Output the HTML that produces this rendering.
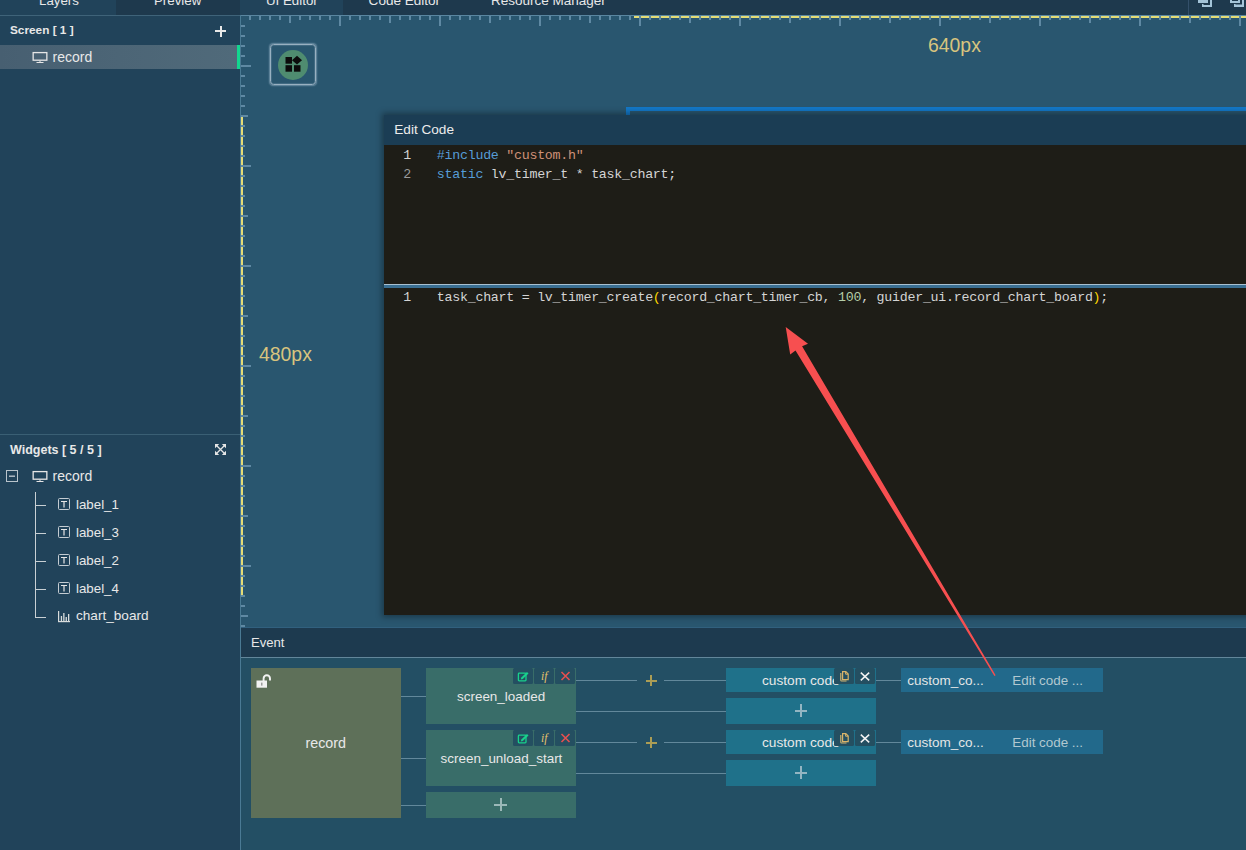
<!DOCTYPE html>
<html><head><meta charset="utf-8">
<style>
*{margin:0;padding:0;box-sizing:border-box}
html,body{width:1246px;height:850px;overflow:hidden;background:#21435a;font-family:"Liberation Sans",sans-serif;color:#e6e6e6}
.a{position:absolute}
.t{position:absolute;white-space:nowrap;line-height:1}
</style></head><body>
<div class="a" style="left:0px;top:0px;width:1246px;height:15px;background:#1e394d;"></div>
<div class="a" style="left:0px;top:0px;width:116px;height:15px;background:#21435a;"></div>
<div class="a" style="left:240px;top:0px;width:103px;height:15px;background:#21435a;"></div>
<div class="t" style="left:39px;top:-6.26px;font-size:13.3px;color:#e8e8e8;font-weight:400;font-family:'Liberation Sans',sans-serif;">Layers</div>
<div class="t" style="left:154px;top:-6.26px;font-size:13.3px;color:#e8e8e8;font-weight:400;font-family:'Liberation Sans',sans-serif;">Preview</div>
<div class="t" style="left:266px;top:-6.26px;font-size:13.3px;color:#e8e8e8;font-weight:400;font-family:'Liberation Sans',sans-serif;">UI Editor</div>
<div class="t" style="left:368.6px;top:-6.47px;font-size:13.55px;color:#e8e8e8;font-weight:400;font-family:'Liberation Sans',sans-serif;">Code Editor</div>
<div class="t" style="left:491px;top:-6.43px;font-size:13.5px;color:#e8e8e8;font-weight:400;font-family:'Liberation Sans',sans-serif;">Resource Manager</div>
<div class="a" style="left:1188px;top:0px;width:1px;height:15px;background:#34506a;"></div>
<svg class="a" style="left:1190px;top:0" width="56" height="15" viewBox="1190 0 56 15"><g fill="#a4c4d8"><rect x="1198" y="0" width="10" height="3"/><rect x="1210" y="0" width="2" height="7"/><rect x="1202" y="5" width="10" height="2"/><rect x="1202" y="4" width="1.5" height="3"/><path d="M1230 0 H1240 V3 H1230Z M1232 0 V1 H1238 V0Z" fill-rule="evenodd"/><rect x="1242" y="0" width="2" height="7"/><rect x="1234" y="4.5" width="10" height="2.5"/><rect x="1234" y="4" width="1.5" height="3"/></g></svg>
<div class="a" style="left:0px;top:15px;width:240px;height:1px;background:#3f6379;"></div>
<div class="a" style="left:0px;top:16px;width:240px;height:834px;background:#21435a;"></div>
<div class="a" style="left:240px;top:15px;width:1px;height:835px;background:#4a7a94;"></div>
<div class="t" style="left:10px;top:25.01px;font-size:11.8px;color:#e8e8e8;font-weight:700;font-family:'Liberation Sans',sans-serif;">Screen [ 1 ]</div>
<div class="a" style="left:215px;top:30px;width:11px;height:2px;background:#e8e8e8;"></div>
<div class="a" style="left:219.5px;top:25.5px;width:2px;height:11px;background:#e8e8e8;"></div>
<div class="a" style="left:0px;top:45px;width:237px;height:24px;background:linear-gradient(90deg,#475f71,#4c6576 50%,#506a7a);"></div>
<div class="a" style="left:237px;top:45px;width:3px;height:24px;background:#12d68f;"></div>
<svg class="a" style="left:32px;top:51px" width="16" height="12" viewBox="0 0 16 12"><rect x="1.15" y="1.6" width="13.7" height="7.6" fill="none" stroke="#e6e6e6" stroke-width="1.3"/><rect x="7.5" y="9.8" width="1" height="1.4" fill="#e6e6e6"/><rect x="4.5" y="11" width="7" height="1" fill="#e6e6e6"/></svg>
<div class="t" style="left:52.5px;top:50.15px;font-size:14px;color:#e8e8e8;font-weight:400;font-family:'Liberation Sans',sans-serif;">record</div>
<div class="a" style="left:0px;top:434px;width:240px;height:1px;background:#3a5f74;"></div>
<div class="t" style="left:10px;top:444.12px;font-size:12.5px;color:#e8e8e8;font-weight:700;font-family:'Liberation Sans',sans-serif;">Widgets [ 5 / 5 ]</div>
<svg class="a" style="left:214px;top:443px" width="13" height="13" viewBox="0 0 13 13"><g stroke="#e6e6e6" stroke-width="1.3" fill="none"><path d="M2.5 2.5 L10.5 10.5 M10.5 2.5 L2.5 10.5"/></g><g fill="#e6e6e6"><path d="M1 1 H5.2 L1 5.2Z"/><path d="M12 1 H7.8 L12 5.2Z"/><path d="M1 12 H5.2 L1 7.8Z"/><path d="M12 12 H7.8 L12 7.8Z"/></g></svg>
<svg class="a" style="left:5px;top:469px" width="14" height="14" viewBox="0 0 14 14"><rect x="1.5" y="1.5" width="11" height="11" fill="none" stroke="#b9c4cc" stroke-width="1"/><rect x="4" y="6.5" width="6" height="1.4" fill="#b9c4cc"/></svg>
<svg class="a" style="left:32px;top:470px" width="16" height="12" viewBox="0 0 16 12"><rect x="1.15" y="1.6" width="13.7" height="7.6" fill="none" stroke="#e6e6e6" stroke-width="1.3"/><rect x="7.5" y="9.8" width="1" height="1.4" fill="#e6e6e6"/><rect x="4.5" y="11" width="7" height="1" fill="#e6e6e6"/></svg>
<div class="t" style="left:52.5px;top:469.15px;font-size:14px;color:#e8e8e8;font-weight:400;font-family:'Liberation Sans',sans-serif;">record</div>
<div class="a" style="left:35px;top:492px;width:1px;height:126px;background:#c9d0d4;"></div>
<div class="a" style="left:35px;top:505px;width:11px;height:1px;background:#c9d0d4;"></div>
<svg class="a" style="left:57px;top:497px" width="14" height="14" viewBox="0 0 14 14"><rect x="1.5" y="1.5" width="11" height="11" rx="1" fill="none" stroke="#c4ccd2" stroke-width="1"/><path d="M4 4.5 H10 M7 4.5 V10.5" stroke="#e6e6e6" stroke-width="1.2" fill="none"/></svg>
<div class="t" style="left:76px;top:497.74px;font-size:13.3px;color:#e8e8e8;font-weight:400;font-family:'Liberation Sans',sans-serif;">label_1</div>
<div class="a" style="left:35px;top:533px;width:11px;height:1px;background:#c9d0d4;"></div>
<svg class="a" style="left:57px;top:525px" width="14" height="14" viewBox="0 0 14 14"><rect x="1.5" y="1.5" width="11" height="11" rx="1" fill="none" stroke="#c4ccd2" stroke-width="1"/><path d="M4 4.5 H10 M7 4.5 V10.5" stroke="#e6e6e6" stroke-width="1.2" fill="none"/></svg>
<div class="t" style="left:76px;top:525.74px;font-size:13.3px;color:#e8e8e8;font-weight:400;font-family:'Liberation Sans',sans-serif;">label_3</div>
<div class="a" style="left:35px;top:561px;width:11px;height:1px;background:#c9d0d4;"></div>
<svg class="a" style="left:57px;top:553px" width="14" height="14" viewBox="0 0 14 14"><rect x="1.5" y="1.5" width="11" height="11" rx="1" fill="none" stroke="#c4ccd2" stroke-width="1"/><path d="M4 4.5 H10 M7 4.5 V10.5" stroke="#e6e6e6" stroke-width="1.2" fill="none"/></svg>
<div class="t" style="left:76px;top:553.74px;font-size:13.3px;color:#e8e8e8;font-weight:400;font-family:'Liberation Sans',sans-serif;">label_2</div>
<div class="a" style="left:35px;top:589px;width:11px;height:1px;background:#c9d0d4;"></div>
<svg class="a" style="left:57px;top:581px" width="14" height="14" viewBox="0 0 14 14"><rect x="1.5" y="1.5" width="11" height="11" rx="1" fill="none" stroke="#c4ccd2" stroke-width="1"/><path d="M4 4.5 H10 M7 4.5 V10.5" stroke="#e6e6e6" stroke-width="1.2" fill="none"/></svg>
<div class="t" style="left:76px;top:581.74px;font-size:13.3px;color:#e8e8e8;font-weight:400;font-family:'Liberation Sans',sans-serif;">label_4</div>
<div class="a" style="left:35px;top:617px;width:11px;height:1px;background:#c9d0d4;"></div>
<svg class="a" style="left:57px;top:609px" width="14" height="14" viewBox="0 0 14 14"><g fill="#d8dcdc"><rect x="1" y="2" width="1.2" height="11"/><rect x="1" y="12" width="12" height="1.2"/><rect x="3.8" y="7" width="1.3" height="5"/><rect x="6.2" y="4" width="1.3" height="8"/><rect x="8.6" y="8" width="1.3" height="4"/><rect x="11" y="5" width="1.3" height="7"/></g></svg>
<div class="t" style="left:76px;top:609.49px;font-size:13.6px;color:#e8e8e8;font-weight:400;font-family:'Liberation Sans',sans-serif;">chart_board</div>
<div class="a" style="left:241px;top:16px;width:1005px;height:612px;background:#29566f;"></div>
<div class="a" style="left:241px;top:15px;width:1005px;height:1px;background:#5a86a0;"></div>
<div class="a" style="left:634px;top:16px;width:612px;height:2px;background:#e4dc76;"></div>
<div class="a" style="left:241px;top:116px;width:2px;height:479px;background:#e4dc76;"></div>
<svg class="a" style="left:0;top:0" width="1246" height="850" viewBox="0 0 1246 850"><g fill="#5f89a3"><rect x="249" y="16" width="2" height="4"/><rect x="259" y="16" width="2" height="4"/><rect x="269" y="16" width="2" height="4"/><rect x="279" y="16" width="2" height="4"/><rect x="289" y="16" width="2" height="7"/><rect x="299" y="16" width="2" height="4"/><rect x="309" y="16" width="2" height="4"/><rect x="319" y="16" width="2" height="4"/><rect x="329" y="16" width="2" height="4"/><rect x="339" y="16" width="2" height="10"/><rect x="349" y="16" width="2" height="4"/><rect x="359" y="16" width="2" height="4"/><rect x="369" y="16" width="2" height="4"/><rect x="379" y="16" width="2" height="4"/><rect x="389" y="16" width="2" height="7"/><rect x="399" y="16" width="2" height="4"/><rect x="409" y="16" width="2" height="4"/><rect x="419" y="16" width="2" height="4"/><rect x="429" y="16" width="2" height="4"/><rect x="439" y="16" width="2" height="10"/><rect x="449" y="16" width="2" height="4"/><rect x="459" y="16" width="2" height="4"/><rect x="469" y="16" width="2" height="4"/><rect x="479" y="16" width="2" height="4"/><rect x="489" y="16" width="2" height="7"/><rect x="499" y="16" width="2" height="4"/><rect x="509" y="16" width="2" height="4"/><rect x="519" y="16" width="2" height="4"/><rect x="529" y="16" width="2" height="4"/><rect x="539" y="16" width="2" height="10"/><rect x="549" y="16" width="2" height="4"/><rect x="559" y="16" width="2" height="4"/><rect x="569" y="16" width="2" height="4"/><rect x="579" y="16" width="2" height="4"/><rect x="589" y="16" width="2" height="7"/><rect x="599" y="16" width="2" height="4"/><rect x="609" y="16" width="2" height="4"/><rect x="619" y="16" width="2" height="4"/><rect x="629" y="16" width="2" height="4"/><rect x="639" y="16" width="2" height="10"/><rect x="649" y="16" width="2" height="4"/><rect x="659" y="16" width="2" height="4"/><rect x="669" y="16" width="2" height="4"/><rect x="679" y="16" width="2" height="4"/><rect x="689" y="16" width="2" height="7"/><rect x="699" y="16" width="2" height="4"/><rect x="709" y="16" width="2" height="4"/><rect x="719" y="16" width="2" height="4"/><rect x="729" y="16" width="2" height="4"/><rect x="739" y="16" width="2" height="10"/><rect x="749" y="16" width="2" height="4"/><rect x="759" y="16" width="2" height="4"/><rect x="769" y="16" width="2" height="4"/><rect x="779" y="16" width="2" height="4"/><rect x="789" y="16" width="2" height="7"/><rect x="799" y="16" width="2" height="4"/><rect x="809" y="16" width="2" height="4"/><rect x="819" y="16" width="2" height="4"/><rect x="829" y="16" width="2" height="4"/><rect x="839" y="16" width="2" height="10"/><rect x="849" y="16" width="2" height="4"/><rect x="859" y="16" width="2" height="4"/><rect x="869" y="16" width="2" height="4"/><rect x="879" y="16" width="2" height="4"/><rect x="889" y="16" width="2" height="7"/><rect x="899" y="16" width="2" height="4"/><rect x="909" y="16" width="2" height="4"/><rect x="919" y="16" width="2" height="4"/><rect x="929" y="16" width="2" height="4"/><rect x="939" y="16" width="2" height="10"/><rect x="949" y="16" width="2" height="4"/><rect x="959" y="16" width="2" height="4"/><rect x="969" y="16" width="2" height="4"/><rect x="979" y="16" width="2" height="4"/><rect x="989" y="16" width="2" height="7"/><rect x="999" y="16" width="2" height="4"/><rect x="1009" y="16" width="2" height="4"/><rect x="1019" y="16" width="2" height="4"/><rect x="1029" y="16" width="2" height="4"/><rect x="1039" y="16" width="2" height="10"/><rect x="1049" y="16" width="2" height="4"/><rect x="1059" y="16" width="2" height="4"/><rect x="1069" y="16" width="2" height="4"/><rect x="1079" y="16" width="2" height="4"/><rect x="1089" y="16" width="2" height="7"/><rect x="1099" y="16" width="2" height="4"/><rect x="1109" y="16" width="2" height="4"/><rect x="1119" y="16" width="2" height="4"/><rect x="1129" y="16" width="2" height="4"/><rect x="1139" y="16" width="2" height="10"/><rect x="1149" y="16" width="2" height="4"/><rect x="1159" y="16" width="2" height="4"/><rect x="1169" y="16" width="2" height="4"/><rect x="1179" y="16" width="2" height="4"/><rect x="1189" y="16" width="2" height="7"/><rect x="1199" y="16" width="2" height="4"/><rect x="1209" y="16" width="2" height="4"/><rect x="1219" y="16" width="2" height="4"/><rect x="1229" y="16" width="2" height="4"/><rect x="1239" y="16" width="2" height="10"/><rect x="241" y="25" width="4" height="2"/><rect x="241" y="35" width="4" height="2"/><rect x="241" y="45" width="4" height="2"/><rect x="241" y="55" width="4" height="2"/><rect x="241" y="65" width="10" height="2"/><rect x="241" y="75" width="4" height="2"/><rect x="241" y="85" width="4" height="2"/><rect x="241" y="95" width="4" height="2"/><rect x="241" y="105" width="4" height="2"/><rect x="241" y="115" width="7" height="2"/><rect x="241" y="125" width="4" height="2"/><rect x="241" y="135" width="4" height="2"/><rect x="241" y="145" width="4" height="2"/><rect x="241" y="155" width="4" height="2"/><rect x="241" y="165" width="10" height="2"/><rect x="241" y="175" width="4" height="2"/><rect x="241" y="185" width="4" height="2"/><rect x="241" y="195" width="4" height="2"/><rect x="241" y="205" width="4" height="2"/><rect x="241" y="215" width="7" height="2"/><rect x="241" y="225" width="4" height="2"/><rect x="241" y="235" width="4" height="2"/><rect x="241" y="245" width="4" height="2"/><rect x="241" y="255" width="4" height="2"/><rect x="241" y="265" width="10" height="2"/><rect x="241" y="275" width="4" height="2"/><rect x="241" y="285" width="4" height="2"/><rect x="241" y="295" width="4" height="2"/><rect x="241" y="305" width="4" height="2"/><rect x="241" y="315" width="7" height="2"/><rect x="241" y="325" width="4" height="2"/><rect x="241" y="335" width="4" height="2"/><rect x="241" y="345" width="4" height="2"/><rect x="241" y="355" width="4" height="2"/><rect x="241" y="365" width="10" height="2"/><rect x="241" y="375" width="4" height="2"/><rect x="241" y="385" width="4" height="2"/><rect x="241" y="395" width="4" height="2"/><rect x="241" y="405" width="4" height="2"/><rect x="241" y="415" width="7" height="2"/><rect x="241" y="425" width="4" height="2"/><rect x="241" y="435" width="4" height="2"/><rect x="241" y="445" width="4" height="2"/><rect x="241" y="455" width="4" height="2"/><rect x="241" y="465" width="10" height="2"/><rect x="241" y="475" width="4" height="2"/><rect x="241" y="485" width="4" height="2"/><rect x="241" y="495" width="4" height="2"/><rect x="241" y="505" width="4" height="2"/><rect x="241" y="515" width="7" height="2"/><rect x="241" y="525" width="4" height="2"/><rect x="241" y="535" width="4" height="2"/><rect x="241" y="545" width="4" height="2"/><rect x="241" y="555" width="4" height="2"/><rect x="241" y="565" width="10" height="2"/><rect x="241" y="575" width="4" height="2"/><rect x="241" y="585" width="4" height="2"/><rect x="241" y="595" width="4" height="2"/><rect x="241" y="605" width="4" height="2"/><rect x="241" y="615" width="7" height="2"/><rect x="241" y="625" width="4" height="2"/></g></svg>
<div class="a" style="left:270px;top:44px;width:46px;height:41px;border:1px solid #98b0c1;border-radius:3.5px;box-shadow:0 0 1.5px 0.8px rgba(150,178,198,.6),inset 0 0 1px 0.5px rgba(150,178,198,.45)"></div>
<svg class="a" style="left:278px;top:50px" width="30" height="30" viewBox="0 0 30 30"><circle cx="15" cy="15" r="15" fill="#4f8c70"/><g fill="#0c0c0c"><rect x="7.5" y="7" width="6.5" height="6.7"/><rect x="7.5" y="15.2" width="6.5" height="6.5"/><rect x="16" y="15.2" width="6.5" height="6.5"/><path d="M19 5.8 L24 10.2 L19 14.6 L14 10.2Z"/></g></svg>
<div class="t" style="left:928px;top:35.57px;font-size:19.4px;color:#d8c47e;font-weight:400;font-family:'Liberation Sans',sans-serif;">640px</div>
<div class="t" style="left:259px;top:344.57px;font-size:19.4px;color:#d8c47e;font-weight:400;font-family:'Liberation Sans',sans-serif;">480px</div>
<div class="a" style="left:626px;top:107px;width:620px;height:4px;background:#1377c6;"></div>
<div class="a" style="left:626px;top:107px;width:4px;height:8px;background:#1377c6;"></div>
<div class="a" style="left:384px;top:115px;width:900px;height:500px;box-shadow:0 0 6px 2px rgba(0,0,0,.35)"></div>
<div class="a" style="left:384px;top:115px;width:862px;height:30px;background:#1b3d54;"></div>
<div class="t" style="left:394.3px;top:123.49px;font-size:13.6px;color:#ececec;font-weight:400;font-family:'Liberation Sans',sans-serif;">Edit Code</div>
<div class="a" style="left:384px;top:145px;width:862px;height:470px;background:#1e1d17;"></div>
<div class="a" style="left:384px;top:284px;width:862px;height:1px;background:#a8c0d0;"></div>
<div class="a" style="left:384px;top:285px;width:862px;height:3px;background:#3a6f93;"></div>
<div class="t" style="left:403.15000000000003px;top:148.51px;font-size:13.3px;color:#d4d4d4;font-weight:400;font-family:'Liberation Mono',monospace;letter-spacing:-0.265px">1</div>
<div class="t" style="left:403.15000000000003px;top:167.51px;font-size:13.3px;color:#d4d4d4;font-weight:400;font-family:'Liberation Mono',monospace;letter-spacing:-0.265px"><span style="color:#9a9a9a">2</span></div>
<div class="t" style="left:436.85px;top:148.51px;font-size:13.3px;color:#d4d4d4;font-weight:400;font-family:'Liberation Mono',monospace;letter-spacing:-0.265px"><span style="color:#569cd6">#include</span> <span style="color:#ce9178">"custom.h"</span></div>
<div class="t" style="left:436.85px;top:167.51px;font-size:13.3px;color:#d4d4d4;font-weight:400;font-family:'Liberation Mono',monospace;letter-spacing:-0.265px"><span style="color:#569cd6">static</span> lv_timer_t * task_chart;</div>
<div class="t" style="left:403.15000000000003px;top:290.51px;font-size:13.3px;color:#d4d4d4;font-weight:400;font-family:'Liberation Mono',monospace;letter-spacing:-0.265px">1</div>
<div class="t" style="left:436.85px;top:290.51px;font-size:13.3px;color:#d4d4d4;font-weight:400;font-family:'Liberation Mono',monospace;letter-spacing:-0.265px">task_chart = lv_timer_create<span style="color:#ffd700">(</span>record_chart_timer_cb, <span style="color:#b5cea8">100</span>, guider_ui.record_chart_board<span style="color:#ffd700">)</span>;</div>
<div class="a" style="left:241px;top:627px;width:1005px;height:1px;background:#31607e;"></div>
<div class="a" style="left:241px;top:628px;width:1005px;height:29px;background:#1d3a4f;"></div>
<div class="t" style="left:251px;top:635.91px;font-size:13.1px;color:#e8e8e8;font-weight:400;font-family:'Liberation Sans',sans-serif;">Event</div>
<div class="a" style="left:241px;top:657px;width:1005px;height:1px;background:#62869a;"></div>
<div class="a" style="left:241px;top:658px;width:1005px;height:192px;background:#234f64;"></div>
<div class="a" style="left:251px;top:668px;width:150px;height:150px;background:#5e7059;"></div>
<svg class="a" style="left:256px;top:674px" width="16" height="14" viewBox="0 0 16 14"><rect x="0.5" y="6.5" width="10.5" height="7.2" fill="#f2f2f2"/><path d="M7.6 7 V4.4 A3.2 3.2 0 0 1 14 4.4 V6.6" stroke="#f2f2f2" stroke-width="1.9" fill="none"/><rect x="5.2" y="8.6" width="1.2" height="3" fill="#888"/></svg>
<div class="t" style="left:305.5px;top:735.89px;font-size:14.3px;color:#e8e8e8;font-weight:400;font-family:'Liberation Sans',sans-serif;">record</div>
<div class="a" style="left:401px;top:696px;width:25px;height:1px;background:#62889b;"></div>
<div class="a" style="left:401px;top:758px;width:25px;height:1px;background:#62889b;"></div>
<div class="a" style="left:401px;top:805px;width:25px;height:1px;background:#62889b;"></div>
<div class="a" style="left:426px;top:668px;width:150px;height:56px;background:#396d69;"></div>
<div class="a" style="left:513px;top:668px;width:20px;height:16px;background:#244f61;border-radius:1.5px"></div>
<div class="a" style="left:534px;top:668px;width:20px;height:16px;background:#244f61;border-radius:1.5px"></div>
<div class="a" style="left:555px;top:668px;width:20px;height:16px;background:#244f61;border-radius:1.5px"></div>
<svg class="a" style="left:516px;top:670px" width="14" height="14" viewBox="0 0 14 14"><rect x="2.4" y="3.2" width="7.6" height="7.6" rx="0.8" fill="none" stroke="#18d28c" stroke-width="1.3"/><path d="M5 9.2 L11.3 2.9" stroke="#24323a" stroke-width="3.4" fill="none" opacity="0"/><path d="M4.8 9.4 L5.3 7.6 L11 1.9 L12.5 3.4 L6.8 9.1Z" fill="#18d28c"/></svg>
<div class="t" style="left:541px;top:670.98px;font-size:11.6px;color:#e6c46c;font-weight:400;font-family:'Liberation Serif',serif;font-style:italic">if</div>
<svg class="a" style="left:560px;top:671px" width="11" height="10" viewBox="0 0 11 10"><path d="M1.5 1 L9.5 9 M9.5 1 L1.5 9" stroke="#e65050" stroke-width="1.6"/></svg>
<div class="t" style="left:457px;top:689.81px;font-size:13.45px;color:#e8e8e8;font-weight:400;font-family:'Liberation Sans',sans-serif;">screen_loaded</div>
<div class="a" style="left:576px;top:680px;width:61px;height:1px;background:#62889b;"></div>
<div class="a" style="left:664px;top:680px;width:62px;height:1px;background:#62889b;"></div>
<div class="a" style="left:576px;top:711px;width:150px;height:1px;background:#62889b;"></div>
<div class="a" style="left:645.5px;top:679.5px;width:11px;height:2px;background:#ab9d55;"></div>
<div class="a" style="left:650px;top:675px;width:2px;height:11px;background:#ab9d55;"></div>
<div class="a" style="left:726px;top:668px;width:150px;height:24px;background:#1f718a;"></div>
<div class="t" style="left:762px;top:674.00px;font-size:13.7px;color:#e8e8e8;font-weight:400;font-family:'Liberation Sans',sans-serif;">custom code</div>
<div class="a" style="left:834px;top:668px;width:20px;height:16px;background:#244f61;border-radius:1.5px"></div>
<div class="a" style="left:855px;top:668px;width:20px;height:16px;background:#244f61;border-radius:1.5px"></div>
<svg class="a" style="left:839px;top:670px" width="11" height="13" viewBox="0 0 11 13"><path d="M1.8 3 V10.3 A0.8 0.8 0 0 0 2.6 11 H7.5" fill="none" stroke="#cdb472" stroke-width="1.2"/><path d="M3.6 1.6 H6.8 L9.2 4 V9.6 H3.6Z" fill="none" stroke="#d9b46a" stroke-width="1.2"/><path d="M6.6 1.8 V4.2 H9" fill="none" stroke="#d9b46a" stroke-width="1"/></svg>
<svg class="a" style="left:860px;top:671.5px" width="10" height="9" viewBox="0 0 10 9"><path d="M0.8 0.6 L9.2 8.4 M9.2 0.6 L0.8 8.4" stroke="#f2f2f2" stroke-width="1.5"/></svg>
<div class="a" style="left:876px;top:680px;width:25px;height:1px;background:#62889b;"></div>
<div class="a" style="left:901px;top:668px;width:202px;height:24px;background:#22698b;"></div>
<div class="t" style="left:907.3px;top:673.97px;font-size:13.5px;color:#e2e6e6;font-weight:400;font-family:'Liberation Sans',sans-serif;">custom_co...</div>
<div class="t" style="left:1012.3px;top:674.05px;font-size:13.4px;color:#b2c8d0;font-weight:400;font-family:'Liberation Sans',sans-serif;">Edit code ...</div>
<div class="a" style="left:726px;top:698px;width:150px;height:26px;background:#1f718a;"></div>
<div class="a" style="left:794.5px;top:709.5px;width:12.5px;height:2px;background:#93b5c2;"></div>
<div class="a" style="left:799.5px;top:704.2px;width:2px;height:12.5px;background:#93b5c2;"></div>
<div class="a" style="left:426px;top:730px;width:150px;height:56px;background:#396d69;"></div>
<div class="a" style="left:513px;top:730px;width:20px;height:16px;background:#244f61;border-radius:1.5px"></div>
<div class="a" style="left:534px;top:730px;width:20px;height:16px;background:#244f61;border-radius:1.5px"></div>
<div class="a" style="left:555px;top:730px;width:20px;height:16px;background:#244f61;border-radius:1.5px"></div>
<svg class="a" style="left:516px;top:732px" width="14" height="14" viewBox="0 0 14 14"><rect x="2.4" y="3.2" width="7.6" height="7.6" rx="0.8" fill="none" stroke="#18d28c" stroke-width="1.3"/><path d="M5 9.2 L11.3 2.9" stroke="#24323a" stroke-width="3.4" fill="none" opacity="0"/><path d="M4.8 9.4 L5.3 7.6 L11 1.9 L12.5 3.4 L6.8 9.1Z" fill="#18d28c"/></svg>
<div class="t" style="left:541px;top:732.98px;font-size:11.6px;color:#e6c46c;font-weight:400;font-family:'Liberation Serif',serif;font-style:italic">if</div>
<svg class="a" style="left:560px;top:733px" width="11" height="10" viewBox="0 0 11 10"><path d="M1.5 1 L9.5 9 M9.5 1 L1.5 9" stroke="#e65050" stroke-width="1.6"/></svg>
<div class="t" style="left:440.6px;top:751.81px;font-size:13.45px;color:#e8e8e8;font-weight:400;font-family:'Liberation Sans',sans-serif;">screen_unload_start</div>
<div class="a" style="left:576px;top:742px;width:61px;height:1px;background:#62889b;"></div>
<div class="a" style="left:664px;top:742px;width:62px;height:1px;background:#62889b;"></div>
<div class="a" style="left:576px;top:773px;width:150px;height:1px;background:#62889b;"></div>
<div class="a" style="left:645.5px;top:741.5px;width:11px;height:2px;background:#ab9d55;"></div>
<div class="a" style="left:650px;top:737px;width:2px;height:11px;background:#ab9d55;"></div>
<div class="a" style="left:726px;top:730px;width:150px;height:24px;background:#1f718a;"></div>
<div class="t" style="left:762px;top:736.00px;font-size:13.7px;color:#e8e8e8;font-weight:400;font-family:'Liberation Sans',sans-serif;">custom code</div>
<div class="a" style="left:834px;top:730px;width:20px;height:16px;background:#244f61;border-radius:1.5px"></div>
<div class="a" style="left:855px;top:730px;width:20px;height:16px;background:#244f61;border-radius:1.5px"></div>
<svg class="a" style="left:839px;top:732px" width="11" height="13" viewBox="0 0 11 13"><path d="M1.8 3 V10.3 A0.8 0.8 0 0 0 2.6 11 H7.5" fill="none" stroke="#cdb472" stroke-width="1.2"/><path d="M3.6 1.6 H6.8 L9.2 4 V9.6 H3.6Z" fill="none" stroke="#d9b46a" stroke-width="1.2"/><path d="M6.6 1.8 V4.2 H9" fill="none" stroke="#d9b46a" stroke-width="1"/></svg>
<svg class="a" style="left:860px;top:733.5px" width="10" height="9" viewBox="0 0 10 9"><path d="M0.8 0.6 L9.2 8.4 M9.2 0.6 L0.8 8.4" stroke="#f2f2f2" stroke-width="1.5"/></svg>
<div class="a" style="left:876px;top:742px;width:25px;height:1px;background:#62889b;"></div>
<div class="a" style="left:901px;top:730px;width:202px;height:24px;background:#22698b;"></div>
<div class="t" style="left:907.3px;top:735.97px;font-size:13.5px;color:#e2e6e6;font-weight:400;font-family:'Liberation Sans',sans-serif;">custom_co...</div>
<div class="t" style="left:1012.3px;top:736.05px;font-size:13.4px;color:#b2c8d0;font-weight:400;font-family:'Liberation Sans',sans-serif;">Edit code ...</div>
<div class="a" style="left:726px;top:760px;width:150px;height:26px;background:#1f718a;"></div>
<div class="a" style="left:794.5px;top:771.5px;width:12.5px;height:2px;background:#93b5c2;"></div>
<div class="a" style="left:799.5px;top:766.2px;width:2px;height:12.5px;background:#93b5c2;"></div>
<div class="a" style="left:426px;top:792px;width:150px;height:26px;background:#396d69;"></div>
<div class="a" style="left:494px;top:803.5px;width:13px;height:2px;background:#9bb8b8;"></div>
<div class="a" style="left:499.5px;top:798px;width:2px;height:13px;background:#9bb8b8;"></div>
<svg class="a" style="left:0;top:0" width="1246" height="850" viewBox="0 0 1246 850"><path d="M785.7 326.9 L808 343.8 L802.1 346.2 L995.6 675.24 L994.4 675.96 L795.5 350.4 L790.2 354.5 Z" fill="#f74f50"/></svg>
</body></html>
